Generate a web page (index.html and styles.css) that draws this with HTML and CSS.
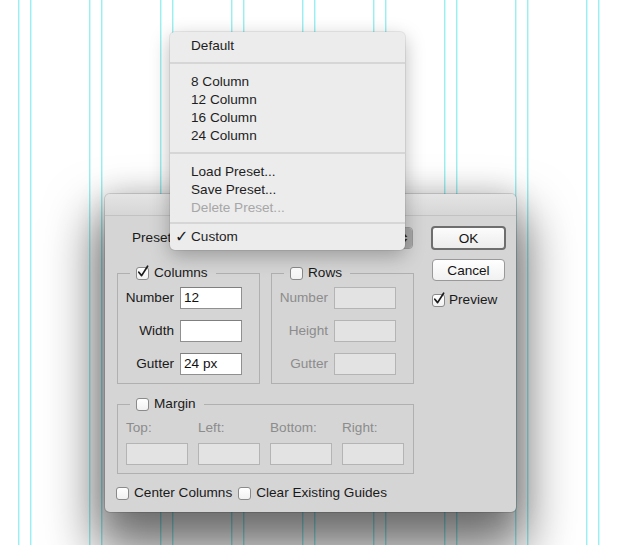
FILE: index.html
```html
<!DOCTYPE html>
<html>
<head>
<meta charset="utf-8">
<title>New Guide Layout</title>
<link rel="stylesheet" href="styles.css">
</head>
<body>
<div class="canvas">
  <div class="dialog">
    <div class="titlebar"></div>
    <div class="body">
      <div class="main">
        <div class="preset-row">
          <span class="label">Preset:</span>
          <div class="popup">
            <span class="popup-arrows">
              <svg width="8" height="12" viewBox="0 0 8 12"><path d="M1.5 5 L4 2 L6.5 5 Z M1.5 7 L4 10 L6.5 7 Z" fill="#2e2e2e"/></svg>
            </span>
          </div>
        </div>
        <div class="groups">
          <div class="group">
            <div class="legend">
              <span class="cb"><svg class="tickmark" width="14" height="14" viewBox="0 0 14 14"><path d="M2.8 7.2 L5.6 10.6 L11.6 1.2" fill="none" stroke="#1b1b1b" stroke-width="1.7" stroke-linecap="round" stroke-linejoin="round"/></svg></span>
              <span>Columns</span>
            </div>
            <div class="fields">
              <label>Number</label><div class="input">12</div>
              <label>Width</label><div class="input"></div>
              <label>Gutter</label><div class="input">24 px</div>
            </div>
          </div>
          <div class="group disabled">
            <div class="legend">
              <span class="cb"></span>
              <span>Rows</span>
            </div>
            <div class="fields">
              <label>Number</label><div class="input off"></div>
              <label>Height</label><div class="input off"></div>
              <label>Gutter</label><div class="input off"></div>
            </div>
          </div>
        </div>
        <div class="group margin">
          <div class="legend">
            <span class="cb"></span>
            <span>Margin</span>
          </div>
          <div class="margin-grid">
            <span class="lbl">Top:</span>
            <span class="lbl">Left:</span>
            <span class="lbl">Bottom:</span>
            <span class="lbl">Right:</span>
            <div class="input off"></div>
            <div class="input off"></div>
            <div class="input off"></div>
            <div class="input off"></div>
          </div>
        </div>
        <div class="options">
          <div class="check"><span class="cb"></span><span>Center Columns</span></div>
          <div class="check"><span class="cb"></span><span>Clear Existing Guides</span></div>
        </div>
      </div>
      <div class="side">
        <div class="btn ok">OK</div>
        <div class="btn cancel">Cancel</div>
        <div class="check preview">
          <span class="cb"><svg class="tickmark" width="14" height="14" viewBox="0 0 14 14"><path d="M2.8 7.2 L5.6 10.6 L11.6 1.2" fill="none" stroke="#1b1b1b" stroke-width="1.7" stroke-linecap="round" stroke-linejoin="round"/></svg></span>
          <span>Preview</span>
        </div>
      </div>
    </div>
  </div>

  <div class="menu">
    <div class="item">Default</div>
    <div class="sep"></div>
    <div class="item">8 Column</div>
    <div class="item">12 Column</div>
    <div class="item">16 Column</div>
    <div class="item">24 Column</div>
    <div class="sep"></div>
    <div class="item">Load Preset...</div>
    <div class="item">Save Preset...</div>
    <div class="item dim">Delete Preset...</div>
    <div class="sep short"></div>
    <div class="item"><span class="tick">✓</span>Custom</div>
  </div>
</div>
</body>
</html>
```

FILE: styles.css
```css
* { box-sizing: border-box; }

html, body {
  margin: 0;
  padding: 0;
}

body {
  width: 620px;
  height: 545px;
  overflow: hidden;
  font-family: "Liberation Sans", Arial, sans-serif;
  font-size: 13.6px;
  color: #1a1a1a;
  background-color: #ffffff;
  background-image: linear-gradient(90deg,
    transparent 18px,
    #9aeff2 18px, #9aeff2 19px,
    #d2f8fa 19px, #d2f8fa 20px,
    transparent 20px, transparent 30px,
    #9aeff2 30px, #9aeff2 31px,
    #d2f8fa 31px, #d2f8fa 32px,
    transparent 32px);
  background-size: 71px 100%;
  background-repeat: repeat-x;
}

.canvas {
  position: relative;
  width: 620px;
  height: 545px;
}

/* ---------- dialog ---------- */
.dialog {
  position: absolute;
  left: 105px;
  top: 194px;
  width: 411px;
  height: 318px;
  background: #d5d5d5;
  border-radius: 5px;
  box-shadow:
    0 30px 50px 10px rgba(0, 0, 0, 0.55),
    0 0 30px rgba(0, 0, 0, 0.14),
    0 0 0 1px rgba(0, 0, 0, 0.13);
}

.titlebar {
  height: 22px;
  border-radius: 5px 5px 0 0;
  background: linear-gradient(#e4e4e4, #d6d6d6);
  border-bottom: 1px solid #c2c2c2;
}

.body {
  display: flex;
  padding: 10px 10px 0 12px;
}

.main {
  width: 297px;
  display: flex;
  flex-direction: column;
}

.side {
  width: 75px;
  margin-left: 17px;
  display: flex;
  flex-direction: column;
  align-items: flex-start;
}

/* preset row */
.preset-row {
  display: flex;
  align-items: center;
  height: 24px;
  padding-left: 15px;
}

.label { line-height: 16px; }

.popup {
  flex: 1;
  height: 22px;
  margin-left: 6px;
  margin-right: 1px;
  border: 1px solid #9c9c9c;
  border-radius: 4px;
  background: linear-gradient(#ffffff, #f2f2f2);
  display: flex;
  justify-content: flex-end;
  overflow: hidden;
}

.popup-arrows {
  width: 15px;
  background: #a9a9a9;
  border-left: 1px solid #939393;
  display: flex;
  align-items: center;
  justify-content: center;
}

/* groups */
.groups {
  display: flex;
  gap: 11px;
  margin-top: 23px;
}

.group {
  width: 143px;
  border: 1px solid #b0b0b0;
  padding: 0 0 8px;
}

.legend {
  display: flex;
  align-items: center;
  gap: 5px;
  height: 16px;
  line-height: 16px;
  width: max-content;
  margin: -9px 0 0 12px;
  padding: 0 8px 0 6px;
  background: #d5d5d5;
}

.fields {
  display: grid;
  grid-template-columns: 56px 62px;
  column-gap: 6px;
  row-gap: 11px;
  align-items: center;
  margin-top: 6px;
}

.fields label {
  text-align: right;
  line-height: 16px;
}

.input {
  height: 22px;
  border: 1px solid #909090;
  border-top-color: #7f7f7f;
  background: #ffffff;
  padding-left: 3px;
  line-height: 20px;
  color: #111;
}

.input.off {
  background: #e3e3e3;
  border-color: #b4b4b4;
}

.group.disabled label,
.lbl {
  color: #8c8c8c;
}

.group.margin {
  width: 297px;
  margin-top: 20px;
}

.margin-grid {
  display: grid;
  grid-template-columns: repeat(4, 62px);
  grid-template-rows: 16px 22px;
  column-gap: 10px;
  row-gap: 7px;
  padding-left: 8px;
  margin-top: 8px;
}

.lbl { line-height: 16px; }

/* checkboxes */
.options {
  display: flex;
  align-items: center;
  height: 16px;
  margin-top: 11px;
  margin-left: -1px;
}

.check {
  display: flex;
  align-items: center;
  gap: 5px;
  line-height: 16px;
}

.check + .check { margin-left: 6px; }

.cb {
  position: relative;
  flex: none;
  width: 13px;
  height: 13px;
  border: 1px solid #8a8a8a;
  border-radius: 3px;
  background: linear-gradient(#ffffff, #f1f1f1);
}

.tickmark {
  position: absolute;
  left: -1px;
  top: -3px;
}

/* buttons */
.btn {
  display: flex;
  align-items: center;
  justify-content: center;
  border-radius: 4px;
  color: #141414;
}

.btn.ok {
  width: 75px;
  height: 24px;
  border: 2px solid #6e6e6e;
  background: linear-gradient(#fcfcfc, #ececec);
}

.btn.cancel {
  width: 73px;
  height: 22px;
  margin: 9px 0 0 1px;
  border: 1px solid #999999;
  background: linear-gradient(#ffffff, #f1f1f1);
}

.check.preview {
  margin: 11px 0 0 1px;
  gap: 4px;
}

/* ---------- menu ---------- */
.menu {
  position: absolute;
  left: 170px;
  top: 32px;
  width: 235px;
  height: 218px;
  padding-top: 5px;
  background: #ececec;
  border-radius: 5px;
  box-shadow:
    0 6px 20px rgba(0, 0, 0, 0.28),
    0 0 0 1px rgba(0, 0, 0, 0.07);
  color: #1e1e1e;
}

.item {
  position: relative;
  height: 18px;
  line-height: 18px;
  padding-left: 21px;
  white-space: nowrap;
}

.item.dim { color: #a7a7a7; }

.sep {
  height: 18px;
  padding-top: 7px;
}

.sep::before {
  content: "";
  display: block;
  height: 2px;
  background: #d6d6d6;
}

.sep.short {
  height: 11px;
  padding-top: 5px;
}

.tick {
  position: absolute;
  left: 5px;
  top: 0;
  font-family: "DejaVu Sans", sans-serif;
  font-size: 16px;
  font-weight: bold;
  color: #1a1a1a;
}
```
